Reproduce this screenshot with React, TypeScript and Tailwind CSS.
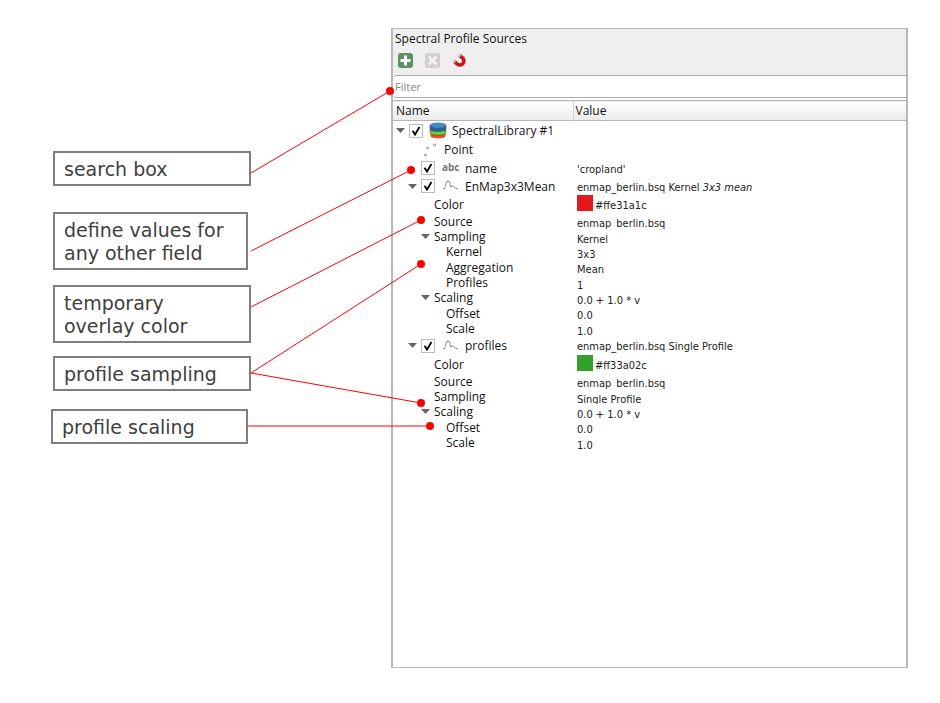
import { useState } from "react";

type Kind = "library" | "point" | "text" | "profile";

interface Row {
  id: string;
  label: string;
  value?: string;
  note?: string;
  color?: string;
  indent: string;
  height: string;
  arrow?: boolean;
  check?: boolean;
  clip?: boolean;
  kind?: Kind;
}

const ROOT = "pl-[2px]";
const POINT = "pl-[28px]";
const FIELD = "pl-[14px]";
const PROP = "pl-[27px]";
const SUB = "pl-[53px]";

const rows: Row[] = [
  { id: "lib", label: "SpectralLibrary #1", indent: ROOT, height: "h-[19px]", arrow: true, check: true, kind: "library" },
  { id: "point", label: "Point", indent: POINT, height: "h-[19px]", kind: "point" },
  { id: "name", label: "name", value: "'cropland'", indent: FIELD, height: "h-[18px]", check: true, kind: "text" },
  { id: "enmap", label: "EnMap3x3Mean", value: "enmap_berlin.bsq Kernel", note: "3x3 mean", indent: FIELD, height: "h-[18px]", arrow: true, check: true, kind: "profile" },
  { id: "e-color", label: "Color", value: "#ffe31a1c", color: "bg-[#e31a1c]", indent: PROP, height: "h-[18px]" },
  { id: "e-source", label: "Source", value: "enmap_berlin.bsq", indent: PROP, height: "h-[16px]", clip: true },
  { id: "e-sampling", label: "Sampling", value: "Kernel", indent: PROP, height: "h-[15px]", arrow: true },
  { id: "e-kernel", label: "Kernel", value: "3x3", indent: SUB, height: "h-[15px]" },
  { id: "e-agg", label: "Aggregation", value: "Mean", indent: SUB, height: "h-[16px]" },
  { id: "e-profiles", label: "Profiles", value: "1", indent: SUB, height: "h-[15px]" },
  { id: "e-scaling", label: "Scaling", value: "0.0 + 1.0 * v", indent: PROP, height: "h-[15px]", arrow: true },
  { id: "e-offset", label: "Offset", value: "0.0", indent: SUB, height: "h-[16px]" },
  { id: "e-scale", label: "Scale", value: "1.0", indent: SUB, height: "h-[15px]" },
  { id: "profiles", label: "profiles", value: "enmap_berlin.bsq Single Profile", indent: FIELD, height: "h-[19px]", arrow: true, check: true, kind: "profile" },
  { id: "p-color", label: "Color", value: "#ff33a02c", color: "bg-[#33a02c]", indent: PROP, height: "h-[18px]" },
  { id: "p-source", label: "Source", value: "enmap_berlin.bsq", indent: PROP, height: "h-[16px]", clip: true },
  { id: "p-sampling", label: "Sampling", value: "Single Profile", indent: PROP, height: "h-[15px]", clip: true },
  { id: "p-scaling", label: "Scaling", value: "0.0 + 1.0 * v", indent: PROP, height: "h-[15px]", arrow: true },
  { id: "p-offset", label: "Offset", value: "0.0", indent: SUB, height: "h-[16px]" },
  { id: "p-scale", label: "Scale", value: "1.0", indent: SUB, height: "h-[15px]" },
];

const callouts = [
  { text: "search box", box: "mt-[151px] w-[198px]" },
  { text: "define values for any other field", box: "mt-[26px] w-[195px]" },
  { text: "temporary overlay color", box: "mt-[15px] w-[198px] pr-10" },
  { text: "profile sampling", box: "mt-[13px] w-[198px]" },
  { text: "profile scaling", box: "mt-[18px] -ml-[2px] w-[197px]" },
];

const leaders = [
  [251, 173, 390, 91],
  [251, 251, 411, 170],
  [251, 307, 421, 220],
  [251, 373, 421, 264],
  [251, 373, 421, 403],
  [248, 426, 430, 426],
];

function KindIcon({ kind }: { kind: Kind }) {
  if (kind === "library") {
    return (
      <svg className="mr-[5px] ml-[6px] h-[17px] w-[18px] shrink-0" viewBox="0 0 18 17">
        <path d="M1.500 10v4c0 3.200 15 3.200 15 0v-4z" fill="#f04a20" />
        <path d="M1 8v2.500c0 3.600 16 3.600 16 0V8z" fill="#6fd030" stroke="#355d2c" strokeWidth=".6" />
        <path d="M1 3v4c0 3.200 16 3.200 16 0V3z" fill="#2f6299" stroke="#244a70" strokeWidth=".6" />
        <ellipse cx="9" cy="3.200" rx="8" ry="2.700" fill="#4c86c0" />
      </svg>
    );
  }
  if (kind === "point") {
    return (
      <svg className="mr-[7px] ml-[2px] h-[14px] w-[14px] shrink-0" viewBox="0 0 14 14" fill="none" stroke="#888" strokeWidth=".8">
        <circle cx="4.500" cy="5" r="1.100" />
        <circle cx="11.500" cy="2" r="1.100" />
        <circle cx="2.500" cy="12" r="1.100" />
      </svg>
    );
  }
  if (kind === "text") {
    return <span className="mr-[5px] ml-[7px] w-[18px] shrink-0 pb-[3px] text-[10px] leading-3 font-bold text-[#777]">abc</span>;
  }
  return (
    <svg className="mr-[6px] ml-[7px] h-[12px] w-[17px] shrink-0" viewBox="0 0 17 12" fill="none" stroke="#808080" strokeWidth="1">
      <path d="M1 8.500h1.500c1 0 1.200-6 2.500-7h2.200c1.100.6.700 5.300 1.600 5.500.8 0 .8-1.700 1.700-1.500s1.400 2.200 2.400 2.400 1.400 1 3.100 1.100" />
    </svg>
  );
}

function TreeRow({ row }: { row: Row }) {
  const [on, setOn] = useState(true);
  return (
    <tr>
      <td className="p-0">
        <div className={`flex items-center whitespace-nowrap ${row.height} ${row.indent}`}>
          {row.indent !== SUB && row.indent !== POINT && (
            <span className="flex w-[14px] shrink-0 pl-[1px]">
              {row.arrow && (
                <svg className="h-[5px] w-[9px]" viewBox="0 0 9 5">
                  <path d="M0 0h9L4.500 5z" fill="#666" />
                </svg>
              )}
            </span>
          )}
          {row.check && (
            <label className="relative flex h-[14px] w-[14px] shrink-0">
              <input
                type="checkbox"
                checked={on}
                onChange={() => setOn(!on)}
                aria-label={row.label}
                className="peer h-[14px] w-[14px] appearance-none border border-[#bdbdbd] bg-white"
              />
              <svg className="pointer-events-none absolute inset-0 hidden peer-checked:block" viewBox="0 0 14 14" fill="none" stroke="#000" strokeWidth="1.800">
                <path d="M3.500 6.800l2.500 3.700L10.500 3" />
              </svg>
            </label>
          )}
          {row.kind && <KindIcon kind={row.kind} />}
          <span className="leading-[15px]">{row.label}</span>
        </div>
      </td>
      <td className="p-0">
        <div
          className={`flex pl-[4px] font-['DejaVu_Sans_Condensed','DejaVu_Sans',sans-serif] text-[11px] whitespace-nowrap text-[#222] ${row.height} ${row.clip ? "overflow-hidden" : ""}`}
        >
          {row.color && <span className={`mr-[2px] h-[16px] w-[16px] shrink-0 ${row.color}`} />}
          <span className="pt-[4px] leading-[14px]">
            {row.value}
            {row.note && <i> {row.note}</i>}
          </span>
        </div>
      </td>
    </tr>
  );
}

export default function App() {
  return (
    <main className="relative flex min-h-screen bg-white">
      <aside className="w-[391px] shrink-0 pl-[53px] font-['DejaVu_Sans',sans-serif] text-[19px] leading-[23px] text-[#404040]">
        {callouts.map((c) => (
          <p key={c.text} className={`border-2 border-[#7f7f7f] px-[9px] pt-[5px] pb-[3px] ${c.box}`}>
            {c.text}
          </p>
        ))}
      </aside>

      <section className="mt-[28px] mr-[32px] mb-[35px] flex flex-1 flex-col border-2 border-t border-b border-[#b8b8b8] bg-white font-['Open_Sans','Noto_Sans',sans-serif] text-[12px] leading-4 text-[#111]">
        <header className="h-[46px] bg-[#efefef] pt-[2px] pl-[2px]">
          <h1>Spectral Profile Sources</h1>
          <div className="flex gap-3 pt-[6px] pl-[3px]">
            <button aria-label="Add source" className="h-[15px] w-[15px]">
              <svg viewBox="0 0 15 15">
                <rect width="15" height="15" rx="3" fill="#5b9160" />
                <path d="M7.500 2.500v10M2.500 7.500h10" stroke="#fff" strokeWidth="3" />
              </svg>
            </button>
            <button aria-label="Remove source" className="h-[15px] w-[15px]">
              <svg viewBox="0 0 15 15">
                <rect width="15" height="15" rx="2" fill="#d5cdcd" />
                <path d="M3.500 3.500l8 8M11.500 3.500l-8 8" stroke="#f5f2f2" strokeWidth="2.500" />
              </svg>
            </button>
            <button aria-label="Snap" className="h-[15px] w-[15px]">
              <svg viewBox="0 0 15 15" fill="none">
                <path d="M2.500 8.500L4.500 10.500C6.500 12.500 9.500 12.500 11 10.500C12.700 8.500 12 6 10 4.500L7.500 2.500" stroke="#cc1414" strokeWidth="3.600" />
                <path d="M1.800 7.900l1.500 1.400M6.900 2.200l1.500 1.200" stroke="#b98a8a" strokeWidth="3.600" />
                <path d="M2.200 8.300l.8.700M7.300 2.500l.8.600" stroke="#fff" strokeWidth="2" />
              </svg>
            </button>
          </div>
        </header>
        <input
          type="text"
          aria-label="Filter"
          placeholder="Filter"
          className="h-[23px] w-full rounded-l-sm border-t border-b border-[#aaa] bg-white pl-[2px] text-[11px] outline-none placeholder:text-[#888]"
        />
        <table className="mt-[2px] w-full table-fixed border-collapse">
          <thead>
            <tr className="h-[20px] border-t border-b border-[#b5b5b5] bg-linear-to-b from-white to-[#ebebeb] text-left">
              <th className="w-[180px] border-r border-[#d5d5d5] p-0 pl-[3px] font-normal">Name</th>
              <th className="p-0 pl-[2px] font-normal">Value</th>
            </tr>
          </thead>
          <tbody>
            {rows.map((r) => (
              <TreeRow key={r.id} row={r} />
            ))}
          </tbody>
        </table>
      </section>

      <svg className="pointer-events-none absolute top-0 left-0 h-[460px] w-[460px]" viewBox="0 0 460 460" stroke="#f00" fill="#f00">
        {leaders.map(([x1, y1, x2, y2]) => (
          <g key={`${x2}-${y2}`}>
            <line x1={x1} y1={y1} x2={x2} y2={y2} />
            <circle cx={x2} cy={y2} r="4" stroke="none" />
          </g>
        ))}
      </svg>
    </main>
  );
}
